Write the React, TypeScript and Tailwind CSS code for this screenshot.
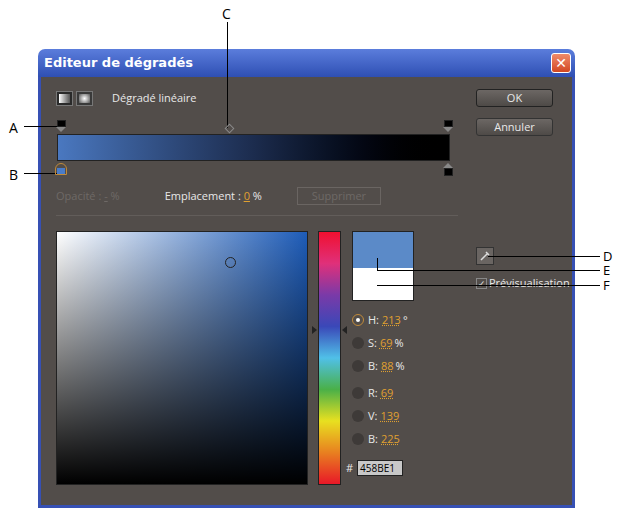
import React from "react";

const radios = [
  { l: "H:", v: "213", u: "°", on: true, mt: "mt-0" },
  { l: "S:", v: "69", u: "%", on: false, mt: "mt-[7px]" },
  { l: "B:", v: "88", u: "%", on: false, mt: "mt-[7px]" },
  { l: "R:", v: "69", u: "", on: false, mt: "mt-[11px]" },
  { l: "V:", v: "139", u: "", on: false, mt: "mt-[7px]" },
  { l: "B:", v: "225", u: "", on: false, mt: "mt-[7px]" },
];

const Stop = ({ top }: { top: boolean }) =>
  top ? (
    <div className="flex flex-col items-center">
      <div className="w-[9px] h-[7px] bg-black border border-[#222]" />
      <div className="w-0 h-0 border-x-[5px] border-x-transparent border-t-[5px] border-t-[#888]" />
    </div>
  ) : (
    <div className="flex flex-col items-center">
      <div className="w-0 h-0 border-x-[5px] border-x-transparent border-b-[5px] border-b-[#888]" />
      <div className="w-[9px] h-[8px] bg-black border border-[#222]" />
    </div>
  );

export default function App() {
  return (
    <div className="relative w-[620px] h-[512px] bg-white overflow-hidden" style={{ fontFamily: "'Open Sans', 'DejaVu Sans', sans-serif" }}>
      {/* callouts */}
      <div className="absolute left-[9px] top-[117px] text-[14px] text-black">A</div>
      <div className="absolute left-[24px] top-[126px] w-[34px] h-px bg-black" />
      <div className="absolute left-[9px] top-[164px] text-[14px] text-black">B</div>
      <div className="absolute left-[24px] top-[173px] w-[34px] h-px bg-black" />
      <div className="absolute left-[222px] top-[3px] text-[14px] text-black">C</div>
      <div className="absolute left-[227px] top-[22px] w-px h-[106px] bg-black" />

      <div className="ml-[38px] mt-[49px] w-[537px] h-[459px] flex flex-col">
        <div className="h-[28px] rounded-t-[7px] bg-gradient-to-b from-[#5b7ddc] to-[#2f4fb3] flex items-center justify-between pl-[6px] pr-[4px]">
          <span className="text-white font-bold text-[13px]" style={{ fontFamily: "'DejaVu Sans', sans-serif" }}>Editeur de dégradés</span>
          <div className="w-[20px] h-[20px] rounded-[3px] bg-gradient-to-b from-[#ef8a6a] to-[#d2461f] border border-white flex items-center justify-center text-white font-bold text-[14px] leading-none">✕</div>
        </div>
        <div className="flex-1 bg-[#524d4a] border-x-[3px] border-b-[3px] border-[#3650b4] flex text-[11px] text-[#e8e8e8]">
          <div className="w-[416px] pl-[15px] pt-[13px] flex flex-col">
            <div className="flex items-center gap-[3px] h-[16px]">
              <div className="w-[17px] h-[15px] bg-[#2a2a2a] border border-[#777] flex items-center justify-center"><div className="w-[11px] h-[9px] bg-gradient-to-r from-white to-[#555]" /></div>
              <div className="w-[17px] h-[15px] bg-[#3a3a3a] border border-[#777] flex items-center justify-center"><div className="w-[11px] h-[9px] bg-[radial-gradient(circle,white,#555)]" /></div>
              <span className="ml-[16px]">Dégradé linéaire</span>
            </div>
            <div className="relative mt-[14px] h-[14px] w-[393px]">
              <div className="absolute left-0 top-0"><Stop top /></div>
              <div className="absolute right-[-4px] top-0"><Stop top /></div>
              <div className="absolute left-[170px] top-[5px] w-[7px] h-[7px] rotate-45 border border-[#888]" />
            </div>
            <div className="ml-[1px] w-[393px] h-[27px] border border-[#222] bg-gradient-to-r from-[#4a78c0] via-[#1c2c4e] to-black" />
            <div className="relative h-[17px] w-[393px]">
              <div className="absolute left-[-1px] top-[2px] w-[12px] h-[12px] rounded-t-full border border-[#c08a3a] flex items-end justify-center"><div className="w-[8px] h-[6px] bg-[#4a7cc8]" /></div>
              <div className="absolute right-[-4px] top-[2px]"><Stop top={false} /></div>
            </div>
            <div className="flex items-center mt-[9px] h-[18px]">
              <span className="text-[#6e6966]">Opacité : <span className="underline">-</span> %</span>
              <span className="ml-[45px]">Emplacement : <span className="text-[#e0a030] underline">0</span> %</span>
              <div className="ml-[35px] w-[84px] h-[18px] border border-[#6a6562] text-[#6e6966] flex items-center justify-center">Supprimer</div>
            </div>
            <div className="mt-[10px] w-[402px] h-px bg-[#625d5a]" />
            <div className="flex mt-[15px]">
              <div className="relative w-[252px] h-[254px] border border-[#222]" style={{ background: "linear-gradient(to bottom, rgba(0,0,0,0), #000), linear-gradient(to right, #fff, #1e5cb8)" }}>
                <div className="absolute left-[168px] top-[25px] w-[11px] h-[11px] rounded-full border border-[#222]" />
              </div>
              <div className="relative ml-[10px] w-[23px] h-[254px] border border-[#222] bg-[linear-gradient(to_bottom,#f01030,#e0307a,#7a3aa8,#3a48b8,#50c0e8,#4ab048,#e8e020,#e88020,#e81828)]">
                <div className="absolute left-[-7px] top-[94px] w-0 h-0 border-y-[4px] border-y-transparent border-l-[5px] border-l-[#222]" />
                <div className="absolute right-[-7px] top-[94px] w-0 h-0 border-y-[4px] border-y-transparent border-r-[5px] border-r-[#222]" />
              </div>
              <div className="ml-[11px] flex flex-col">
                <div className="w-[62px] h-[70px] border border-[#222] flex flex-col">
                  <div className="h-[36px] bg-[#5b8ac8]" />
                  <div className="flex-1 bg-white" />
                </div>
                <div className="mt-[11px] flex flex-col">
                  {radios.map((r, i) => (
                    <div key={i} className={`flex items-center h-[16px] ${r.mt}`}>
                      <div className={`w-[12px] h-[12px] rounded-full flex items-center justify-center ${r.on ? "border border-[#c08a3a]" : "bg-[#3e3a38]"}`}>
                        {r.on && <div className="w-[4px] h-[4px] rounded-full bg-white" />}
                      </div>
                      <span className="ml-[4px]">{r.l}</span>
                      <span className="ml-[3px] text-[#e0a030] underline decoration-dotted">{r.v}</span>
                      <span className="ml-[2px]">{r.u}</span>
                    </div>
                  ))}
                  <div className="flex items-center mt-[13px] -ml-[6px]">
                    <span>#</span>
                    <div className="ml-[4px] w-[46px] h-[16px] bg-[#c8c8c8] border border-[#222] text-black text-[10px] flex items-center pl-[2px]">458BE1</div>
                  </div>
                </div>
              </div>
            </div>
          </div>
          <div className="pt-[12px] pl-[19px] flex flex-col">
            <div className="w-[77px] h-[18px] rounded-[3px] border border-[#222] bg-gradient-to-b from-[#6c6764] to-[#4e4a47] flex items-center justify-center">OK</div>
            <div className="mt-[11px] w-[77px] h-[18px] rounded-[3px] border border-[#333] bg-gradient-to-b from-[#6c6764] to-[#4e4a47] flex items-center justify-center">Annuler</div>
            <div className="mt-[111px] w-[18px] h-[18px] border border-[#333] bg-[#6a6562] flex items-center justify-center">
              <svg width="12" height="12" viewBox="0 0 12 12"><path d="M2 10 L8 4 M7 2 L10 5" stroke="#ddd" strokeWidth="1.5" /></svg>
            </div>
            <div className="mt-[10px] flex items-center">
              <div className="w-[11px] h-[11px] border border-[#888] flex items-center justify-center text-[9px] leading-none">✓</div>
              <span className="ml-[2px]">Prévisualisation</span>
            </div>
          </div>
        </div>
      </div>

      {/* D E F callouts */}
      <div className="absolute left-[488px] top-[256px] w-[112px] h-px bg-black" />
      <div className="absolute left-[603px] top-[250px] text-[13px] leading-[13px] text-black">D</div>
      <div className="absolute left-[377px] top-[258px] w-px h-[12px] bg-black" />
      <div className="absolute left-[377px] top-[270px] w-[223px] h-px bg-black" />
      <div className="absolute left-[603px] top-[264px] text-[13px] leading-[13px] text-black">E</div>
      <div className="absolute left-[377px] top-[285px] w-[223px] h-px bg-black" />
      <div className="absolute left-[603px] top-[279px] text-[13px] leading-[13px] text-black">F</div>
    </div>
  );
}
